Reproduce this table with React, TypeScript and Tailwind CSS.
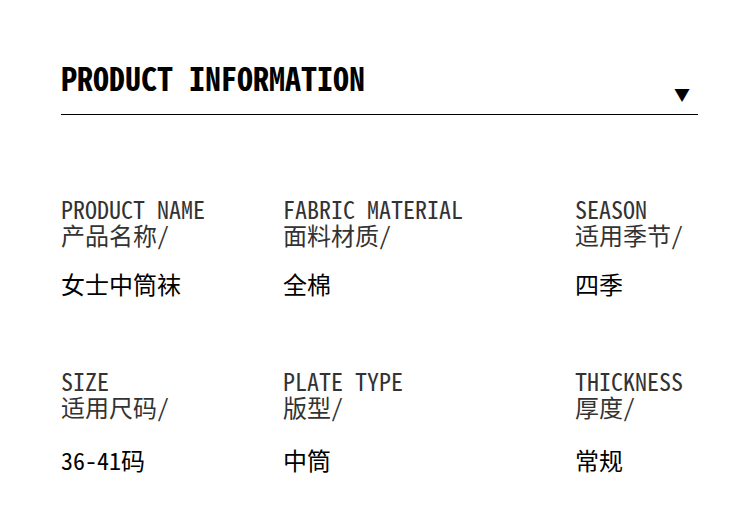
const font = { fontFamily: '"Noto Sans Mono CJK SC", "Noto Sans CJK SC", monospace' };

const rows = [
  {
    gap: "mt-[22px]",
    cells: [
      { en: "PRODUCT NAME", zh: "产品名称/", value: "女士中筒袜" },
      { en: "FABRIC MATERIAL", zh: "面料材质/", value: "全棉" },
      { en: "SEASON", zh: "适用季节/", value: "四季" },
    ],
  },
  {
    gap: "mt-[26px]",
    cells: [
      { en: "SIZE", zh: "适用尺码/", value: "36-41码" },
      { en: "PLATE TYPE", zh: "版型/", value: "中筒" },
      { en: "THICKNESS", zh: "厚度/", value: "常规" },
    ],
  },
];

export default function App() {
  return (
    <div className="w-[750px] h-[514px] bg-white overflow-hidden" style={font}>
      <div className="pl-[61px] pr-[52px] pt-[57px]">
        <div className="flex items-end justify-between border-b border-black pb-[17px]">
          <h1 className="text-[32px] leading-[40px] font-bold text-black">PRODUCT INFORMATION</h1>
          <span className="text-[16px] leading-none text-black mb-[-5px] mr-[8px]">▼</span>
        </div>
      </div>
      <div className="pl-[61px] pt-[81px] flex flex-col gap-[70px]">
        {rows.map((row, i) => (
          <div key={i} className="grid grid-cols-[222px_292px_1fr]">
            {row.cells.map((c) => (
              <div key={c.en} className="flex flex-col">
                <p className="text-[24px] leading-[26px] text-[#333]">
                  {c.en}
                  <br />
                  {c.zh}
                </p>
                <div className={`${row.gap} text-[24px] leading-[28px] text-black`}>{c.value}</div>
              </div>
            ))}
          </div>
        ))}
      </div>
    </div>
  );
}
